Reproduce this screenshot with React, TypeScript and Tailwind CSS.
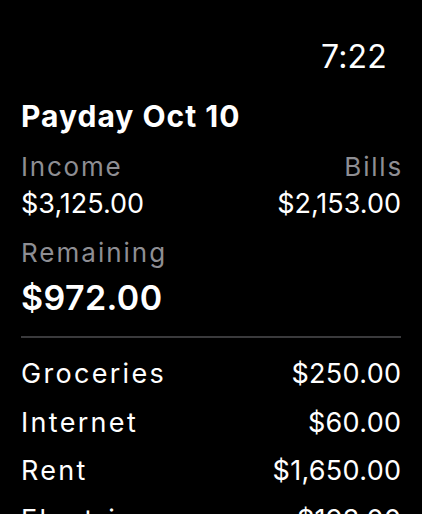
import React from "react";

const rows = [
  { name: "Groceries", amount: "$250.00" },
  { name: "Internet", amount: "$60.00" },
  { name: "Rent", amount: "$1,650.00" },
  { name: "Electric", amount: "$193.00" },
];

export default function App() {
  return (
    <div
      className="w-[422px] h-[514px] overflow-hidden bg-black text-white"
      style={{ fontFamily: "Inter, 'Noto Sans', sans-serif" }}
    >
      <div className="flex justify-end pr-[35px] pt-[37px]">
        <span className="text-[32px] leading-[39px] font-normal tracking-[0.2px]">7:22</span>
      </div>
      <div className="px-[21px]">
        <div className="mt-[22px] text-[30px] leading-[36px] font-bold tracking-[1px]">Payday Oct 10</div>
        <div className="mt-[17px] flex justify-between text-[26px] leading-[31px] text-[#8e8e93] tracking-[1.8px]">
          <span>Income</span>
          <span className="mr-[-2px]">Bills</span>
        </div>
        <div className="mt-[5px] flex justify-between text-[27px] leading-[33px]">
          <span>$3,125.00</span>
          <span>$2,153.00</span>
        </div>
        <div className="mt-[17px] text-[26px] leading-[31px] text-[#8e8e93] tracking-[2px]">Remaining</div>
        <div className="mt-[9px] text-[34px] leading-[41px] font-semibold tracking-[0.4px]">$972.00</div>
        <div className="mt-[18px] h-[2px] bg-[#3a3a3c]" />
        <div className="mt-[19px] flex flex-col">
          {rows.map((r) => (
            <div key={r.name} className="flex justify-between h-[48.5px] shrink-0 text-[27px] leading-[33px]">
              <span className="tracking-[2.3px]">{r.name}</span>
              <span className="tracking-[0.3px] mr-[-0.3px]">{r.amount}</span>
            </div>
          ))}
        </div>
      </div>
    </div>
  );
}
